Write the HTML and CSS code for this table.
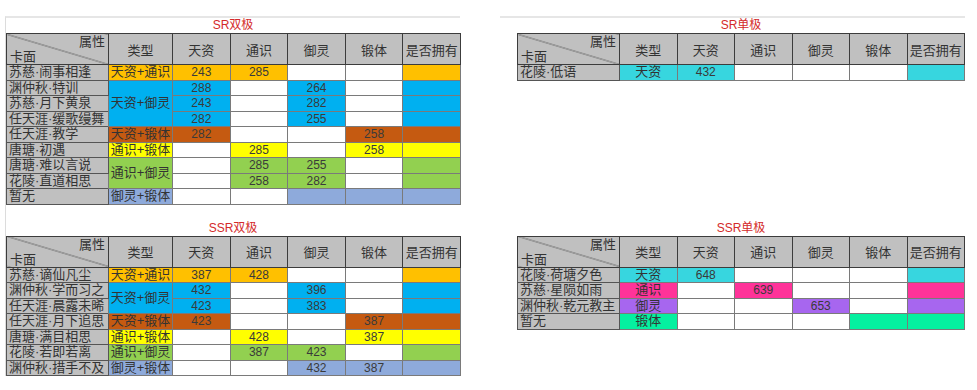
FILE: index.html
```html
<!DOCTYPE html>
<html lang="zh-CN">
<head>
    <meta charset="UTF-8">
    <title>卡面属性</title>
    <link rel="stylesheet" href="styles.css">
</head>
<body>
    <div class="sheet">
        <!-- SR双极 -->
        <div class="block left top">
            <div class="title">SR双极</div>
            <table class="grid wide">
                <colgroup><col class="c-name"><col class="c-type"><col><col><col><col><col></colgroup>
                <tr class="head">
                    <th class="corner"><span class="attr">属性</span><span class="card">卡面</span></th>
                    <th>类型</th><th>天资</th><th>通识</th><th>御灵</th><th>锻体</th><th>是否拥有</th>
                </tr>
                <tr>
                    <td class="name">苏慈·闹事相逢</td><td class="or">天资+通识</td>
                    <td class="n or">243</td><td class="n or">285</td><td></td><td></td><td class="or"></td>
                </tr>
                <tr>
                    <td class="name">渊仲秋·特训</td><td class="bl" rowspan="3">天资+御灵</td>
                    <td class="n bl">288</td><td></td><td class="n bl">264</td><td></td><td class="bl"></td>
                </tr>
                <tr>
                    <td class="name">苏慈·月下黄泉</td>
                    <td class="n bl">243</td><td></td><td class="n bl">282</td><td></td><td class="bl"></td>
                </tr>
                <tr>
                    <td class="name">任天涯·缓歌缦舞</td>
                    <td class="n bl">282</td><td></td><td class="n bl">255</td><td></td><td class="bl"></td>
                </tr>
                <tr>
                    <td class="name">任天涯·教学</td><td class="br">天资+锻体</td>
                    <td class="n br">282</td><td></td><td></td><td class="n br">258</td><td class="br"></td>
                </tr>
                <tr>
                    <td class="name">唐瑭·初遇</td><td class="ye">通识+锻体</td>
                    <td></td><td class="n ye">285</td><td></td><td class="n ye">258</td><td class="ye"></td>
                </tr>
                <tr>
                    <td class="name">唐瑭·难以言说</td><td class="gr" rowspan="2">通识+御灵</td>
                    <td></td><td class="n gr">285</td><td class="n gr">255</td><td></td><td class="gr"></td>
                </tr>
                <tr>
                    <td class="name">花陵·直道相思</td>
                    <td></td><td class="n gr">258</td><td class="n gr">282</td><td></td><td class="gr"></td>
                </tr>
                <tr>
                    <td class="name">暂无</td><td class="pe">御灵+锻体</td>
                    <td></td><td></td><td class="pe"></td><td class="pe"></td><td class="pe"></td>
                </tr>
            </table>
        </div>

        <!-- SR单极 -->
        <div class="block right top">
            <div class="title">SR单极</div>
            <table class="grid narrow">
                <colgroup><col class="c-name"><col><col><col><col><col><col></colgroup>
                <tr class="head">
                    <th class="corner"><span class="attr">属性</span><span class="card">卡面</span></th>
                    <th>类型</th><th>天资</th><th>通识</th><th>御灵</th><th>锻体</th><th>是否拥有</th>
                </tr>
                <tr>
                    <td class="name">花陵·低语</td><td class="cy">天资</td>
                    <td class="n cy">432</td><td></td><td></td><td></td><td class="cy"></td>
                </tr>
            </table>
        </div>

        <!-- SSR双极 -->
        <div class="block left">
            <div class="title">SSR双极</div>
            <table class="grid wide">
                <colgroup><col class="c-name"><col class="c-type"><col><col><col><col><col></colgroup>
                <tr class="head">
                    <th class="corner"><span class="attr">属性</span><span class="card">卡面</span></th>
                    <th>类型</th><th>天资</th><th>通识</th><th>御灵</th><th>锻体</th><th>是否拥有</th>
                </tr>
                <tr>
                    <td class="name">苏慈·谪仙凡尘</td><td class="or">天资+通识</td>
                    <td class="n or">387</td><td class="n or">428</td><td></td><td></td><td class="or"></td>
                </tr>
                <tr>
                    <td class="name">渊仲秋·学而习之</td><td class="bl" rowspan="2">天资+御灵</td>
                    <td class="n bl">432</td><td></td><td class="n bl">396</td><td></td><td class="bl"></td>
                </tr>
                <tr>
                    <td class="name">任天涯·晨露未晞</td>
                    <td class="n bl">423</td><td></td><td class="n bl">383</td><td></td><td class="bl"></td>
                </tr>
                <tr>
                    <td class="name">任天涯·月下追思</td><td class="br">天资+锻体</td>
                    <td class="n br">423</td><td></td><td></td><td class="n br">387</td><td class="br"></td>
                </tr>
                <tr>
                    <td class="name">唐瑭·满目相思</td><td class="ye">通识+锻体</td>
                    <td></td><td class="n ye">428</td><td></td><td class="n ye">387</td><td class="ye"></td>
                </tr>
                <tr>
                    <td class="name">花陵·若即若离</td><td class="gr">通识+御灵</td>
                    <td></td><td class="n gr">387</td><td class="n gr">423</td><td></td><td class="gr"></td>
                </tr>
                <tr>
                    <td class="name">渊仲秋·措手不及</td><td class="pe">御灵+锻体</td>
                    <td></td><td></td><td class="n pe">432</td><td class="n pe">387</td><td class="pe"></td>
                </tr>
            </table>
        </div>

        <!-- SSR单极 -->
        <div class="block right">
            <div class="title">SSR单极</div>
            <table class="grid narrow">
                <colgroup><col class="c-name"><col><col><col><col><col><col></colgroup>
                <tr class="head">
                    <th class="corner"><span class="attr">属性</span><span class="card">卡面</span></th>
                    <th>类型</th><th>天资</th><th>通识</th><th>御灵</th><th>锻体</th><th>是否拥有</th>
                </tr>
                <tr>
                    <td class="name">花陵·荷塘夕色</td><td class="cy">天资</td>
                    <td class="n cy">648</td><td></td><td></td><td></td><td class="cy"></td>
                </tr>
                <tr>
                    <td class="name">苏慈·星陨如雨</td><td class="pk">通识</td>
                    <td></td><td class="n pk">639</td><td></td><td></td><td class="pk"></td>
                </tr>
                <tr>
                    <td class="name">渊仲秋·乾元教主</td><td class="pu">御灵</td>
                    <td></td><td></td><td class="n pu">653</td><td></td><td class="pu"></td>
                </tr>
                <tr>
                    <td class="name">暂无</td><td class="mi">锻体</td>
                    <td></td><td></td><td></td><td class="mi"></td><td class="mi"></td>
                </tr>
            </table>
        </div>
    </div>
</body>
</html>
```

FILE: styles.css
```css
* { box-sizing: border-box; }
body { margin: 0; background: #fff; color: #333; font-family: "Liberation Sans", "Noto Sans CJK SC", sans-serif; font-size: 13px; }

.sheet { display: grid; grid-template-columns: 455px 465px; column-gap: 40px; row-gap: 16px; padding: 16px 0 8px 5px; }
.block.left { border-left: 1px solid #dcdcdc; }
.block.top { border-top: 2px solid #e6e6e6; }
.block.right { padding-left: 17px; }
.block.left:not(.top) { margin-top: -16px; padding-top: 16px; }

.title { height: 15px; line-height: 15px; font-size: 12px; color: #d42a2a; text-align: center; }
.block.right .title { padding-left: 0; }

.grid { border-collapse: collapse; table-layout: fixed; }
.grid.wide { width: 455px; }
.grid.narrow { width: 448px; }
.grid .c-name { width: 102px; }
.wide .c-type { width: 64px; }

.grid th, .grid td { border: 1px solid #7a7a7a; padding: 0; text-align: center; white-space: nowrap; overflow: hidden; font-weight: normal; }
.grid th { background: #c0c0c0; border-color: #3c3c3c; }
.grid tr { height: 15.5px; }
.grid tr.head { height: 30px; }
.grid td { line-height: 14px; }
.grid td.n { font-size: 12px; color: #3a3a3a; }
.grid td.name { background: #c0c0c0; text-align: left; padding-left: 2px; border-color: #555; }

.corner { background: linear-gradient(to top right, transparent calc(50% - 0.7px), #5a5a5a 50%, transparent calc(50% + 0.7px)) #c0c0c0 !important; line-height: 15px; }
.corner span { display: block; padding: 0 3px; }
.corner .attr { text-align: right; }
.corner .card { text-align: left; }

.or { background: #ffc000; }
.bl { background: #00b0f0; }
.br { background: #c55a11; }
.ye { background: #ffff00; }
.gr { background: #92d050; }
.pe { background: #8eaadb; }
.cy { background: #37d6df; }
.pk { background: #ff3399; }
.pu { background: #a766ef; }
.mi { background: #05f0a0; }
```
